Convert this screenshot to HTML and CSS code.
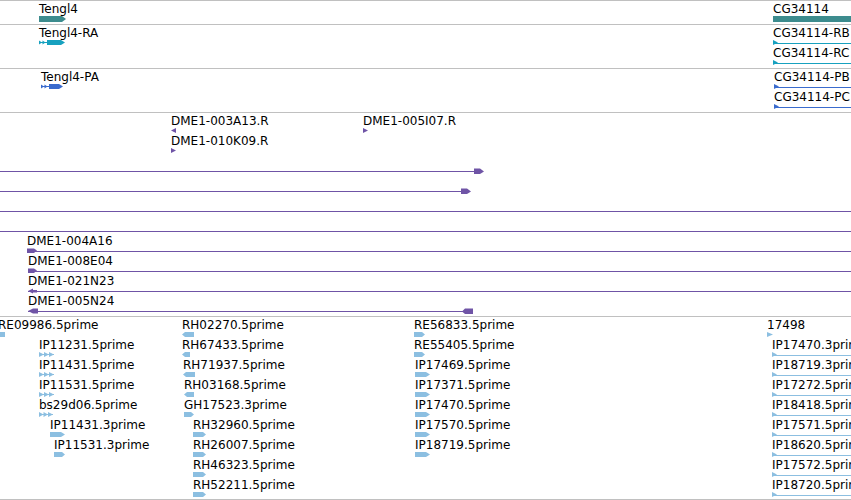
FILE: index.html
```html
<!DOCTYPE html>
<html>
<head>
<meta charset="utf-8">
<title>Genome browser tracks</title>
<link rel="stylesheet" href="styles.css">
</head>
<body>
<div class="browser">

  <div class="track track-gene">
    <div class="feat" style="left:39px;top:2px"><div class="lbl">Tengl4</div><svg class="gl c-gene" width="28" height="7"><path d="M0 0H23L27 3L23 6H0Z"/></svg></div>
    <div class="feat" style="left:773px;top:2px"><div class="lbl">CG34114</div><svg class="gl c-gene" width="80" height="7"><rect x="0" y="0" width="80" height="6"/></svg></div>
  </div>

  <div class="track track-tx">
    <div class="feat" style="left:39px;top:2px"><div class="lbl">Tengl4-RA</div><svg class="gl c-ra" width="28" height="7"><path d="M0 2H8V3H0Z M0 0.5L3 2.5L0 4.5Z M3.5 0.5L6.5 2.5L3.5 4.5Z M8 0H22L26 2.5L22 5H8Z"/></svg></div>
    <div class="feat" style="left:773px;top:2px"><div class="lbl">CG34114-RB</div><svg class="gl c-ra" width="80" height="7"><path d="M0 0L5 2.5L0 5Z"/><rect x="0" y="3" width="80" height="1"/></svg></div>
    <div class="feat" style="left:773px;top:22px"><div class="lbl">CG34114-RC</div><svg class="gl c-ra" width="80" height="7"><path d="M0 0L5 2.5L0 5Z"/><rect x="0" y="3" width="80" height="1"/></svg></div>
  </div>

  <div class="track track-tx">
    <div class="feat" style="left:41px;top:2px"><div class="lbl">Tengl4-PA</div><svg class="gl c-pa" width="24" height="7"><path d="M0 2H8V3H0Z M0 0.5L3 2.5L0 4.5Z M3.5 0.5L6.5 2.5L3.5 4.5Z M8 0H18L22 2.5L18 5H8Z"/></svg></div>
    <div class="feat" style="left:774px;top:2px"><div class="lbl">CG34114-PB</div><svg class="gl c-pa" width="80" height="7"><path d="M0 0L5 2.5L0 5Z"/><rect x="0" y="3" width="80" height="1"/></svg></div>
    <div class="feat" style="left:774px;top:22px"><div class="lbl">CG34114-PC</div><svg class="gl c-pa" width="80" height="7"><path d="M0 0L5 2.5L0 5Z"/><rect x="0" y="3" width="80" height="1"/></svg></div>
  </div>

  <div class="track track-clone">
    <div class="feat" style="left:171px;top:2px"><div class="lbl">DME1-003A13.R</div><svg class="gl c-clone" width="6" height="7"><path d="M0 2.5L5 0V5Z"/></svg></div>
    <div class="feat" style="left:363px;top:2px"><div class="lbl">DME1-005I07.R</div><svg class="gl c-clone" width="6" height="7"><path d="M0 0L5 2.5L0 5Z"/></svg></div>
    <div class="feat" style="left:171px;top:22px"><div class="lbl">DME1-010K09.R</div><svg class="gl c-clone" width="6" height="7"><path d="M0 0L5 2.5L0 5Z"/></svg></div>
    <div class="feat" style="left:0;top:42px"><div class="lbl"></div><svg class="gl c-clone" width="490" height="7"><rect x="0" y="3" width="476" height="1"/><path d="M474 0.5H480L484 3.5L480 6H474Z"/></svg></div>
    <div class="feat" style="left:0;top:62px"><div class="lbl"></div><svg class="gl c-clone" width="480" height="7"><rect x="0" y="3" width="463" height="1"/><path d="M461 0.5H467L471 3.5L467 6H461Z"/></svg></div>
    <div class="feat" style="left:0;top:82px"><div class="lbl"></div><svg class="gl c-clone" width="851" height="7"><rect x="0" y="3" width="851" height="1"/></svg></div>
    <div class="feat" style="left:0;top:102px"><div class="lbl"></div><svg class="gl c-clone" width="851" height="7"><rect x="0" y="3" width="851" height="1"/></svg></div>
    <div class="feat" style="left:27px;top:122px"><div class="lbl">DME1-004A16</div><svg class="gl c-clone" width="830" height="7"><path d="M0 0.5H7L10 2.5L7 5H0Z"/><rect x="0" y="3" width="830" height="1"/></svg></div>
    <div class="feat" style="left:28px;top:142px"><div class="lbl">DME1-008E04</div><svg class="gl c-clone" width="830" height="7"><path d="M0 0.5H6L9 2.5L6 5H0Z"/><rect x="0" y="3" width="830" height="1"/></svg></div>
    <div class="feat" style="left:28px;top:162px"><div class="lbl">DME1-021N23</div><svg class="gl c-clone" width="830" height="7"><path d="M0 3L5 0.5V5.5Z M5 2H9V4.5H5Z"/><rect x="0" y="3" width="830" height="1"/></svg></div>
    <div class="feat" style="left:28px;top:182px"><div class="lbl">DME1-005N24</div><svg class="gl c-clone" width="450" height="7"><path d="M0 3L5 0.5H10V5.5H5Z"/><rect x="0" y="3" width="436" height="1"/><path d="M434 3.5L437 0.5H445V6H437Z"/></svg></div>
  </div>

  <div class="track track-est">
    <div class="feat" style="left:-2px;top:2px"><div class="lbl">RE09986.5prime</div><svg class="gl c-est" width="8" height="7"><rect x="2" y="0" width="5" height="5"/></svg></div>
    <div class="feat" style="left:39px;top:22px"><div class="lbl">IP11231.5prime</div><svg class="gl c-est" width="16" height="7"><path d="M0 2H15V3H0Z M0 0L5 2.5L0 5Z M5 0L10 2.5L5 5Z M10 0L15 2.5L10 5Z"/></svg></div>
    <div class="feat" style="left:39px;top:42px"><div class="lbl">IP11431.5prime</div><svg class="gl c-est" width="16" height="7"><path d="M0 2H15V3H0Z M0 0L5 2.5L0 5Z M5 0L10 2.5L5 5Z M10 0L15 2.5L10 5Z"/></svg></div>
    <div class="feat" style="left:39px;top:62px"><div class="lbl">IP11531.5prime</div><svg class="gl c-est" width="16" height="7"><path d="M0 2H15V3H0Z M0 0L5 2.5L0 5Z M5 0L10 2.5L5 5Z M10 0L15 2.5L10 5Z"/></svg></div>
    <div class="feat" style="left:39px;top:82px"><div class="lbl">bs29d06.5prime</div><svg class="gl c-est" width="16" height="7"><path d="M0 2H14V3H0Z M0 0L4.5 2.5L0 5Z M4.5 0L9 2.5L4.5 5Z M9 0L14 2.5L9 5Z"/></svg></div>
    <div class="feat" style="left:50px;top:102px"><div class="lbl">IP11431.3prime</div><svg class="gl c-est" width="16" height="7"><path d="M0 0H11L15 2.5L11 5H0Z"/></svg></div>
    <div class="feat" style="left:54px;top:122px"><div class="lbl">IP11531.3prime</div><svg class="gl c-est" width="12" height="7"><path d="M0 0H8L11 2.5L8 5H0Z"/></svg></div>

    <div class="feat" style="left:182px;top:2px"><div class="lbl">RH02270.5prime</div><svg class="gl c-est" width="13" height="7"><path d="M0 2.5L3 0H12V5H3Z"/></svg></div>
    <div class="feat" style="left:182px;top:22px"><div class="lbl">RH67433.5prime</div><svg class="gl c-est" width="9" height="7"><path d="M0 2.5L3 0H8V5H3Z"/></svg></div>
    <div class="feat" style="left:183px;top:42px"><div class="lbl">RH71937.5prime</div><svg class="gl c-est" width="13" height="7"><path d="M0 2.5L3 0H12V5H3Z"/></svg></div>
    <div class="feat" style="left:184px;top:62px"><div class="lbl">RH03168.5prime</div><svg class="gl c-est" width="11" height="7"><path d="M0 2.5L3 0H10V5H3Z"/></svg></div>
    <div class="feat" style="left:184px;top:82px"><div class="lbl">GH17523.3prime</div><svg class="gl c-est" width="11" height="7"><path d="M0 0H7L10 2.5L7 5H0Z"/></svg></div>
    <div class="feat" style="left:193px;top:102px"><div class="lbl">RH32960.5prime</div><svg class="gl c-est" width="14" height="7"><path d="M0 0H10L13 2.5L10 5H0Z"/></svg></div>
    <div class="feat" style="left:193px;top:122px"><div class="lbl">RH26007.5prime</div><svg class="gl c-est" width="14" height="7"><path d="M0 0H10L13 2.5L10 5H0Z"/></svg></div>
    <div class="feat" style="left:193px;top:142px"><div class="lbl">RH46323.5prime</div><svg class="gl c-est" width="14" height="7"><path d="M0 0H10L13 2.5L10 5H0Z"/></svg></div>
    <div class="feat" style="left:193px;top:162px"><div class="lbl">RH52211.5prime</div><svg class="gl c-est" width="14" height="7"><path d="M0 0H10L13 2.5L10 5H0Z"/></svg></div>

    <div class="feat" style="left:414px;top:2px"><div class="lbl">RE56833.5prime</div><svg class="gl c-est" width="12" height="7"><path d="M0 0H8L11 2.5L8 5H0Z"/></svg></div>
    <div class="feat" style="left:414px;top:22px"><div class="lbl">RE55405.5prime</div><svg class="gl c-est" width="12" height="7"><path d="M0 0H8L11 2.5L8 5H0Z"/></svg></div>
    <div class="feat" style="left:415px;top:42px"><div class="lbl">IP17469.5prime</div><svg class="gl c-est" width="16" height="7"><path d="M0 0H11L15 2.5L11 5H0Z"/></svg></div>
    <div class="feat" style="left:415px;top:62px"><div class="lbl">IP17371.5prime</div><svg class="gl c-est" width="16" height="7"><path d="M0 0H11L15 2.5L11 5H0Z"/></svg></div>
    <div class="feat" style="left:415px;top:82px"><div class="lbl">IP17470.5prime</div><svg class="gl c-est" width="16" height="7"><path d="M0 0H11L15 2.5L11 5H0Z"/></svg></div>
    <div class="feat" style="left:415px;top:102px"><div class="lbl">IP17570.5prime</div><svg class="gl c-est" width="16" height="7"><path d="M0 0H11L15 2.5L11 5H0Z"/></svg></div>
    <div class="feat" style="left:415px;top:122px"><div class="lbl">IP18719.5prime</div><svg class="gl c-est" width="16" height="7"><path d="M0 0H11L15 2.5L11 5H0Z"/></svg></div>

    <div class="feat" style="left:767px;top:2px"><div class="lbl">17498</div><svg class="gl c-est" width="7" height="7"><path d="M0 0L6 2.5L0 5Z"/></svg></div>
    <div class="feat" style="left:772px;top:22px"><div class="lbl">IP17470.3prime</div><svg class="gl c-est" width="80" height="7"><path d="M0 0L5 2.5L0 5Z"/><rect x="0" y="3" width="80" height="1"/></svg></div>
    <div class="feat" style="left:772px;top:42px"><div class="lbl">IP18719.3prime</div><svg class="gl c-est" width="80" height="7"><path d="M0 0L5 2.5L0 5Z"/><rect x="0" y="3" width="80" height="1"/></svg></div>
    <div class="feat" style="left:772px;top:62px"><div class="lbl">IP17272.5prime</div><svg class="gl c-est" width="80" height="7"><path d="M0 0L5 2.5L0 5Z"/><rect x="0" y="3" width="80" height="1"/></svg></div>
    <div class="feat" style="left:772px;top:82px"><div class="lbl">IP18418.5prime</div><svg class="gl c-est" width="80" height="7"><path d="M0 0L5 2.5L0 5Z"/><rect x="0" y="3" width="80" height="1"/></svg></div>
    <div class="feat" style="left:772px;top:102px"><div class="lbl">IP17571.5prime</div><svg class="gl c-est" width="80" height="7"><path d="M0 0L5 2.5L0 5Z"/><rect x="0" y="3" width="80" height="1"/></svg></div>
    <div class="feat" style="left:772px;top:122px"><div class="lbl">IP18620.5prime</div><svg class="gl c-est" width="80" height="7"><path d="M0 0L5 2.5L0 5Z"/><rect x="0" y="3" width="80" height="1"/></svg></div>
    <div class="feat" style="left:772px;top:142px"><div class="lbl">IP17572.5prime</div><svg class="gl c-est" width="80" height="7"><path d="M0 0L5 2.5L0 5Z"/><rect x="0" y="3" width="80" height="1"/></svg></div>
    <div class="feat" style="left:772px;top:162px"><div class="lbl">IP18720.5prime</div><svg class="gl c-est" width="80" height="7"><path d="M0 0L5 2.5L0 5Z"/><rect x="0" y="3" width="80" height="1"/></svg></div>
  </div>

</div>
</body>
</html>
```

FILE: styles.css
```css
html, body {
  margin: 0;
  padding: 0;
  background: #ffffff;
  overflow: hidden;
}

.browser {
  width: 851px;
  border-top: 1px solid #c0c0c0;
  font-family: "DejaVu Sans", "Liberation Sans", sans-serif;
  font-size: 12px;
  line-height: 13px;
  color: #000000;
}

.track {
  position: relative;
  overflow: hidden;
  border-bottom: 1px solid #c0c0c0;
}

.track-gene { height: 23px; }
.track-tx { height: 43px; }
.track-clone { height: 203px; }
.track-est { height: 182px; }

.feat {
  position: absolute;
  white-space: nowrap;
}

.lbl {
  height: 13px;
  line-height: 13px;
}

.gl {
  display: block;
  overflow: visible;
}

.c-gene { fill: #3d8c8e; }
.c-ra { fill: #17a1bf; }
.c-pa { fill: #3a6bcd; }
.c-clone { fill: #6f54a6; }
.c-est { fill: #8cbfe1; }
```
